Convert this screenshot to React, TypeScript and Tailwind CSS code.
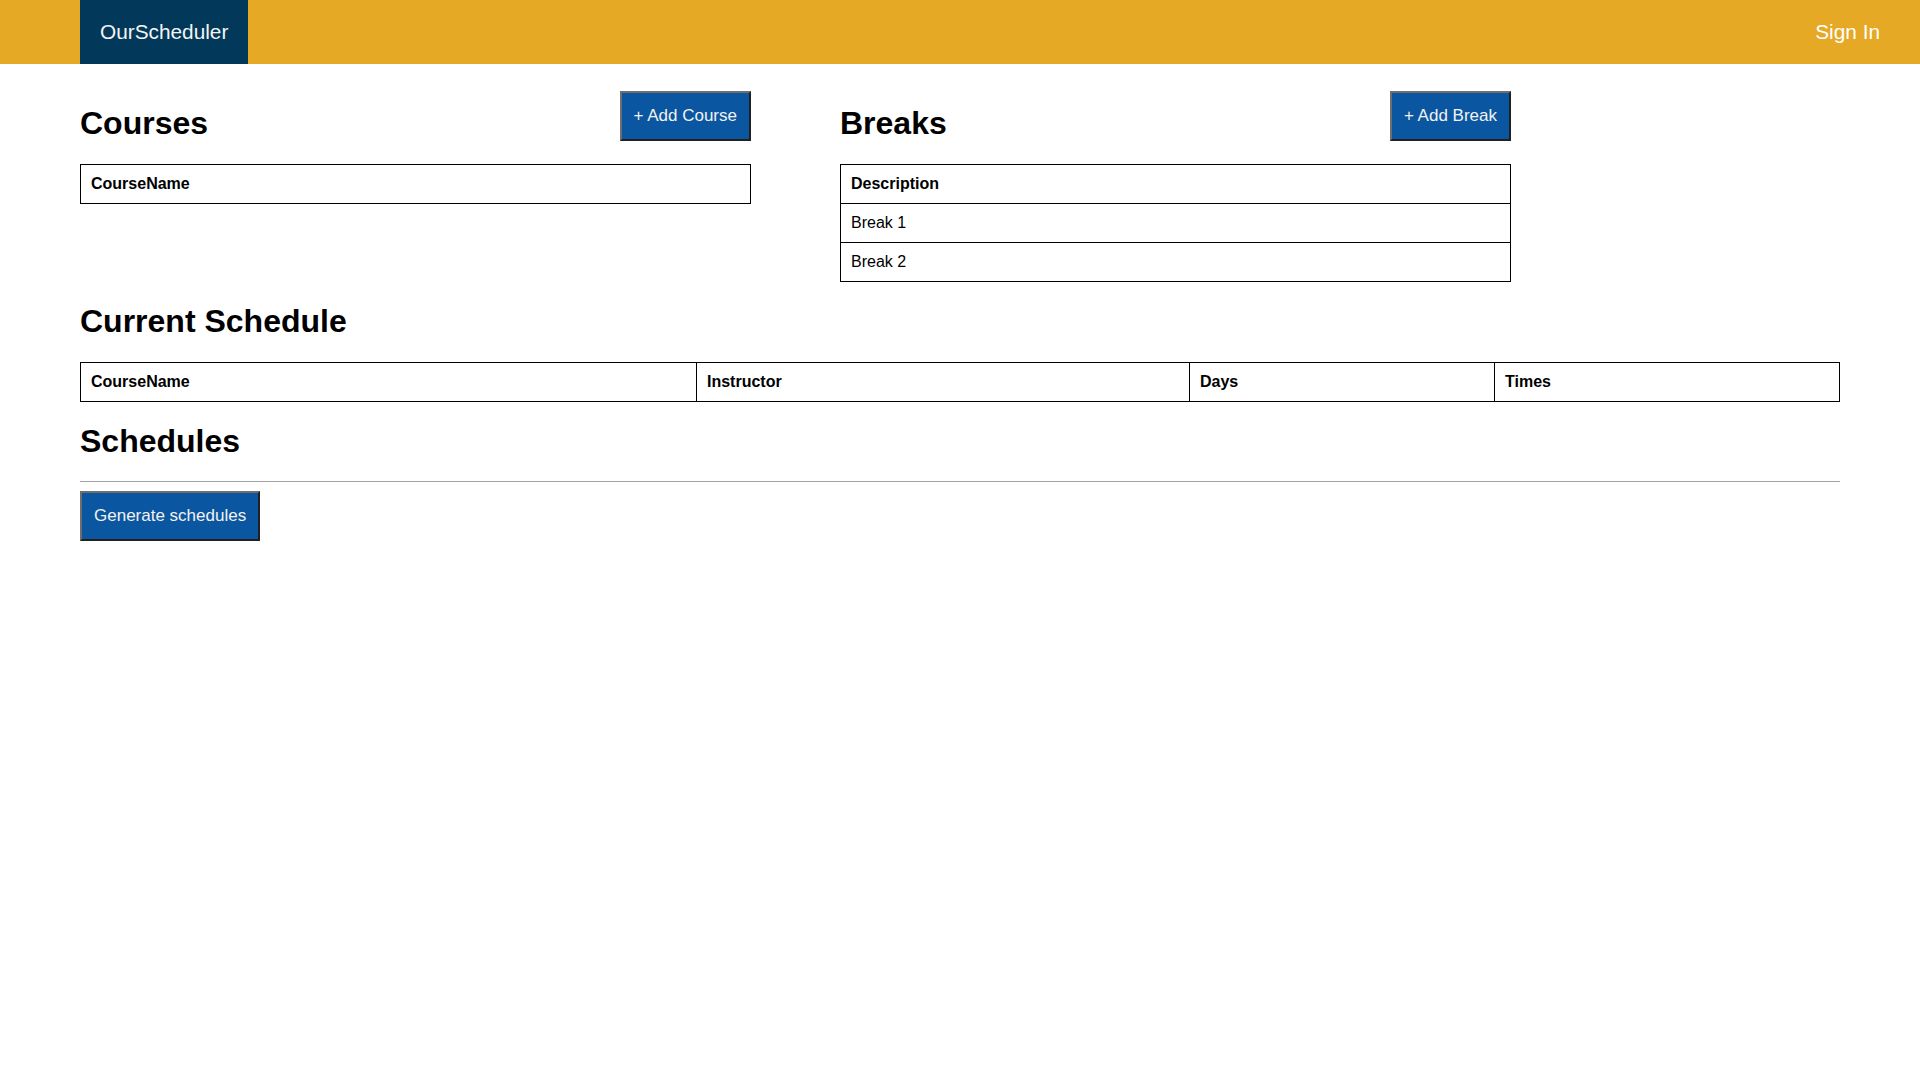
import React from "react";

const FONT = "font-['Liberation_Sans',Arial,sans-serif]";

const btn =
  "border-2 border-t-[#6e6e6e] border-l-[#6e6e6e] border-b-[#202020] border-r-[#202020] bg-[#0b56a0] px-3 py-[13px] text-[17px] leading-[20px] text-[#f2f2f2]";

const cell = "border border-black px-[10px] py-[10px] text-left text-[16px] leading-[18px]";

function Heading({ children, tight }: { children: React.ReactNode; tight?: boolean }) {
  return (
    <h2 className={tight ? "text-[32px] font-bold leading-[35px]" : "text-[32px] font-bold leading-[37px]"}>
      {children}
    </h2>
  );
}

export default function App() {
  const breaks = ["Break 1", "Break 2"];

  return (
    <div className={`${FONT} min-h-screen bg-white text-black`}>
      <nav className="flex h-16 items-center justify-between bg-[#e5a926] pl-20 pr-10">
        <a className="flex h-full items-center bg-[#023859] px-5 text-[20.8px] text-[#f4f4f4]">OurScheduler</a>
        <a className="text-[20.8px] text-white">Sign In</a>
      </nav>

      <main className="px-20 pt-[27px]">
        <div className="flex gap-[89px]">
          <section className="w-[671px]">
            <div className="flex items-end justify-between">
              <Heading tight>Courses</Heading>
              <button className={btn}>+ Add Course</button>
            </div>
            <table className="mt-[23px] w-full border-collapse">
              <thead>
                <tr>
                  <th className={`${cell} font-bold`}>CourseName</th>
                </tr>
              </thead>
            </table>
          </section>

          <section className="w-[671px]">
            <div className="flex items-end justify-between">
              <Heading tight>Breaks</Heading>
              <button className={btn}>+ Add Break</button>
            </div>
            <table className="mt-[23px] w-full border-collapse">
              <thead>
                <tr>
                  <th className={`${cell} font-bold`}>Description</th>
                </tr>
              </thead>
              <tbody>
                {breaks.map((b) => (
                  <tr key={b}>
                    <td className={`${cell} font-normal`}>{b}</td>
                  </tr>
                ))}
              </tbody>
            </table>
          </section>
        </div>

        <div className="mt-[21px]">
          <Heading>Current Schedule</Heading>
          <table className="mt-[22px] w-full border-collapse">
            <thead>
              <tr>
                <th className={`${cell} w-[616px] font-bold`}>CourseName</th>
                <th className={`${cell} w-[493px] font-bold`}>Instructor</th>
                <th className={`${cell} w-[305px] font-bold`}>Days</th>
                <th className={`${cell} font-bold`}>Times</th>
              </tr>
            </thead>
          </table>
        </div>

        <div className="mt-[21px]">
          <Heading>Schedules</Heading>
          <hr className="mt-[21px] border-t border-[#a3a3a3]" />
          <button className={`${btn} mt-[9px]`}>Generate schedules</button>
        </div>
      </main>
    </div>
  );
}
